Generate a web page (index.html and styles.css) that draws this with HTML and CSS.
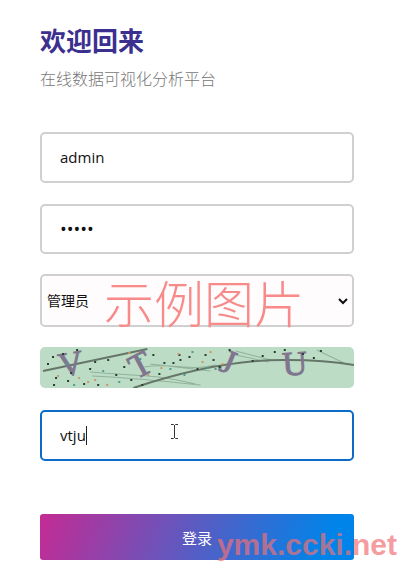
FILE: index.html
```html
<!DOCTYPE html>
<html lang="zh-CN">
  <head>
    <meta charset="UTF-8">
    <meta name="viewport" content="width=device-width, initial-scale=1">
    <title>登录</title>
    <link rel="stylesheet" href="styles.css">
  </head>

  <body>
    <main class="login">
      <h1 class="title">欢迎回来</h1>
      <p class="subtitle">在线数据可视化分析平台</p>

      <form class="form">
        <input class="field" type="text" name="username" value="admin" aria-label="用户名">
        <input class="field password" type="password" name="password" value="admin" aria-label="密码">

        <div class="role">
          <select class="roleSelect" name="role" aria-label="角色">
            <option>管理员</option>
            <option>用户</option>
          </select>
          <svg class="arrow" viewBox="0 0 12 8"><path d="M2 2l4 4 4-4"/></svg>
          <span class="sample">示例图片</span>
        </div>

        <svg class="captcha" viewBox="0 0 313 41" preserveAspectRatio="none" role="img" aria-label="验证码">
          <rect width="313" height="41" fill="#bcdcc5"/>
          <g class="scratches">
            <path d="M50 25C95 29 115 27 155 37M52 29C95 31 120 34 160 38M104 20C130 15 150 25 175 18M195 4L230 13M190 7L228 15M276 3L305 17M110 17L170 24"/>
          </g>
          <g class="lines">
            <path d="M3 24L107 2"/>
            <path d="M93 41C135 27 190 12 248 13C275 13 295 15 313 18"/>
          </g>
          <g class="letters">
            <text x="31" y="28" transform="rotate(-10 31 18)">V</text>
            <text x="100" y="29" transform="rotate(-28 100 18)">T</text>
            <text x="187" y="26" transform="rotate(22 187 16)">J</text>
            <text x="254" y="28" transform="rotate(-4 254 16)">U</text>
          </g>
          <g class="dots">
            <path d="M12 10h2M22 7h2M36 3h2M54 15h2M67 13h2M49 22h2M15 31h2M27 34h2M13 38h2M43 37h2M57 38h2M75 28h2M83 20h2M90 33h2M101 38h2M112 8h2M123 16h2M132 16h2M138 8h2M139 13h2M148 10h2M156 22h2M164 8h2M172 13h2M178 20h2M188 3h2M211 14h2M221 9h2M233 5h2M243 3h2M261 7h2M272 11h2M279 4h2M118 27h2M30 26h2M7 17h2"/>
          </g>
          <g class="dots warm">
            <path d="M47 35h2M54 33h2M17 29h2M66 38h2M120 21h2M137 7h2M169 5h2M161 15h2M181 17h2M88 6h2M38 31h2M107 28h2"/>
          </g>
          <g class="dots cool">
            <path d="M25 17h2M33 38h2M62 24h2M78 35h2M129 22h2M151 5h2M166 21h2M174 22h2M99 12h2M143 28h2"/>
          </g>
        </svg>

        <div class="code">
          <input class="field active" type="text" name="code" value="vtju" aria-label="请输入验证码">
          <span class="caret"></span>
          <svg class="pointer" viewBox="0 0 7 15"><path d="M0 .5h2.5l1 1 1-1H7M3.5 1v13M0 14.5h2.5l1-1 1 1H7"/></svg>
        </div>

        <button class="loginBtn" type="button">登录</button>
      </form>
    </main>

    <div class="watermark">ymk.ccki.net</div>
  </body>
</html>
```

FILE: styles.css
```css
* {
  box-sizing: border-box;
}

body {
  position: relative;
  margin: 0;
  background-color: white;
  font-family: "Open Sans", "Noto Sans CJK SC", sans-serif;
}

.login {
  padding: 20px 54px 23px 40px;
}

.title {
  margin: 0;
  color: #3b308f;
  font-family: "Noto Sans CJK SC", sans-serif;
  font-size: 26px;
  font-weight: 700;
  line-height: 40px;
}

.subtitle {
  margin: 6px 0 0;
  color: #777;
  font-family: "Noto Sans CJK SC", sans-serif;
  font-size: 16px;
  font-weight: 300;
  line-height: 24px;
}

.form {
  display: flex;
  flex-direction: column;
  gap: 20px;
  margin-top: 42px;
}

.field {
  display: block;
  width: 100%;
  height: 51px;
  padding: 0 18px 1px;
  border: 2px solid #d0d0d0;
  border-radius: 5px;
  outline: none;
  background-color: white;
  color: #111;
  font-family: inherit;
  font-size: 15px;
}

.password {
  height: 50px;
  margin-top: 1px;
  font-size: 18px;
}

.active {
  border-color: #0b6bc7;
}

.role {
  position: relative;
}

.roleSelect {
  display: block;
  width: 100%;
  height: 53px;
  padding: 0 5px 2px;
  border: 2px solid #d0d0d0;
  border-radius: 5px;
  appearance: none;
  background-color: #fffcfd;
  color: #111;
  font-family: "Noto Sans CJK SC", sans-serif;
  font-size: 14px;
}

.arrow {
  position: absolute;
  top: 23px;
  right: 5px;
  width: 12px;
  height: 8px;
  fill: none;
  stroke: #111;
  stroke-width: 2;
  pointer-events: none;
}

.sample {
  position: absolute;
  top: 0;
  left: 64px;
  color: #f88a8a;
  font-family: "Noto Sans CJK SC", sans-serif;
  font-size: 50px;
  font-weight: 300;
  line-height: 54px;
  white-space: nowrap;
  pointer-events: none;
}

.captcha {
  display: block;
  width: 100%;
  height: 41px;
  border-radius: 5px;
}

.scratches {
  fill: none;
  stroke: #92b29b;
}

.lines {
  fill: none;
  stroke: #657568;
  stroke-width: 2;
}

.letters {
  fill: #80758f;
  stroke: #80758f;
  font-family: "Liberation Serif", serif;
  font-size: 34px;
  line-height: 34px;
  text-anchor: middle;
}

.dots {
  stroke: #263f32;
  stroke-width: 2;
}

.warm {
  stroke: #c99865;
}

.cool {
  stroke: #4c9c91;
}

.code {
  position: relative;
  margin-top: 2px;
}

.caret {
  position: absolute;
  top: 16px;
  left: 46px;
  width: 1px;
  height: 19px;
  background-color: #222;
}

.pointer {
  position: absolute;
  top: 14px;
  left: 131px;
  width: 7px;
  height: 15px;
  fill: none;
  stroke: #333;
}

.loginBtn {
  height: 46px;
  margin-top: 33px;
  border: none;
  border-radius: 3px;
  background: linear-gradient(110deg, #c42b94, #0084e9 90%);
  color: white;
  font-family: "Noto Sans CJK SC", sans-serif;
  font-size: 15px;
}

.watermark {
  position: absolute;
  right: 11px;
  bottom: 20px;
  color: rgba(240, 112, 116, 0.7);
  font-family: "Liberation Sans", Arial, sans-serif;
  font-size: 30px;
  font-weight: 700;
  line-height: 36px;
  pointer-events: none;
}
```
